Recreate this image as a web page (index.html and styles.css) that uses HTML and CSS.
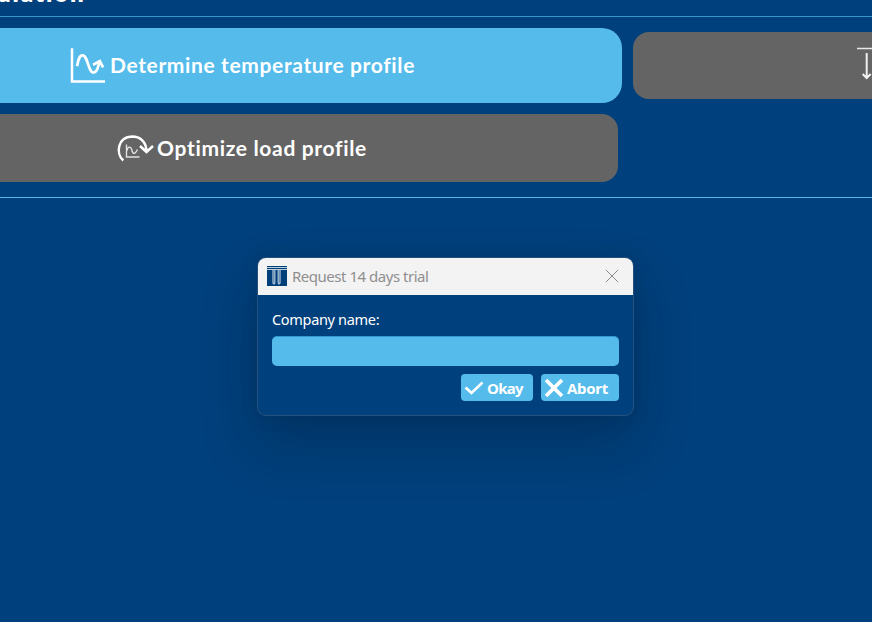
FILE: index.html
```html
<!DOCTYPE html>
<html lang="en">
<head>
<meta charset="utf-8">
<title>Request 14 days trial</title>
<link rel="stylesheet" href="styles.css">
</head>
<body>
<main class="page">
  <header class="heading"><h1>ulation</h1></header>
  <section class="options">
    <div class="row">
      <button class="option active">
        <svg class="icon-profile" viewBox="0 0 36 36" width="36" height="36"><path d="M3 1.500v32H35" stroke-width="2.500"/><path d="M8.300 17C9.500 11 10.500 7.300 13.500 7.300c5.500 0 5.500 17.200 11 17.200 3.500 0 4.800-5.500 6-11M25.200 16.200l5.600-3 2.700 5" stroke-width="2.700"/></svg>
        <span>Determine temperature profile</span>
      </button>
      <button class="option side">
        <svg viewBox="0 0 32 36" width="32" height="36"><path d="M0 2.500h32" stroke-width="1.500" opacity=".85"/><path d="M9.700 7v24M5.700 28l4 4 4-4" stroke-width="2" opacity=".9"/></svg>
      </button>
    </div>
    <button class="option optimize">
      <svg viewBox="0 0 38 30" width="38" height="30"><path d="M7.300 27.500C-.5 20.500 1.500 4 16 3.500c8 0 14.500 5 14.500 15.500M24 13l6.500 6 6.500-6" stroke-width="2.500"/><path d="M10.500 11.500v12.500h13M11 17.500c1-5 4-4 5 0s3 4 5.500-1" stroke-width="1.400" opacity=".8"/></svg>
      <span>Optimize load profile</span>
    </button>
  </section>
</main>
<div class="dialog" role="dialog">
  <div class="titlebar">
    <svg class="logo" viewBox="0 0 20 20" width="20" height="20"><path fill="#003f7a" stroke="none" d="M0 0h20v20H0z"/><path d="M0 1.500h20M0 3.500h20" stroke="#b9cddd" stroke-width="1"/><path d="M6 4v13q.9 1.800 1.800 0V4M11.200 4v13q.9 1.800 1.800 0V4" stroke="#b9cddd" stroke-width="1.200"/></svg>
    <span class="title">Request 14 days trial</span>
    <svg class="close" viewBox="0 0 12 12" width="12" height="12"><path d="M0 0l12 12M12 0L0 12"/></svg>
  </div>
  <form class="form">
    <label for="company">Company name:</label>
    <input id="company" type="text">
    <div class="actions">
      <button type="button" class="action okay"><svg viewBox="0 0 20 20" width="20" height="20"><path d="M1.500 9.500l6 5.500L18.500 4.500" stroke-width="2.600"/></svg><span>Okay</span></button>
      <button type="button" class="action abort"><svg viewBox="0 0 20 20" width="20" height="20"><path d="M2 2l16 16M18 2L2 18" stroke-width="3.800"/></svg><span>Abort</span></button>
    </div>
  </form>
</div>
</body>
</html>
```
FILE: styles.css
```css
* { box-sizing: border-box; }
body {
  margin: 0;
  width: 872px;
  height: 622px;
  overflow: hidden;
  background: #00407c;
  color: #fff;
  font-family: "Noto Sans", sans-serif;
}
svg { flex: none; fill: none; stroke: #fff; }
button { border: 0; padding: 0; color: #fff; font: inherit; }
.heading {
  height: 17px;
  border-bottom: 1px solid #3796cc;
  display: flex;
  align-items: flex-start;
}
h1 {
  margin: -20px 0 0 -3px;
  font: 800 24px/26px Lato, sans-serif;
  letter-spacing: 1.900px;
}
.options {
  height: 181px;
  padding-top: 11px;
  border-bottom: 1px solid #54b9e9;
}
.row { display: flex; align-items: center; gap: 11px; height: 75px; }
.option {
  display: flex;
  align-items: center;
  background: #646464;
  font: 700 21px/26px Lato, sans-serif;
  white-space: nowrap;
}
.active {
  width: 622px;
  height: 75px;
  padding-left: 69px;
  gap: 5px;
  border-radius: 0 20px 20px 0;
  background: #54bbeb;
  letter-spacing: .630px;
}
.active span { margin-top: -1px; }
.side {
  width: 239px;
  height: 67px;
  padding: 0 0 4px 224px;
  border-radius: 16px 0 0 16px;
  overflow: hidden;
}
.optimize {
  width: 618px;
  height: 68px;
  margin-top: 11px;
  padding-left: 116px;
  gap: 3px;
  border-radius: 0 16px 16px 0;
  letter-spacing: .670px;
}
.icon-profile { stroke-linecap: square; }
.dialog {
  position: absolute;
  left: 257px;
  top: 257px;
  width: 377px;
  height: 159px;
  border: 1px solid #26517c;
  border-radius: 9px;
  overflow: hidden;
  background: #00407c;
  box-shadow: 0 28px 54px rgba(0, 20, 40, .28), 0 0 18px rgba(0, 20, 40, .13);
}
.titlebar {
  height: 37px;
  display: flex;
  align-items: center;
  padding: 0 15px 2px 9px;
  background: #f3f3f3;
  color: #8f8f8f;
}
.title { margin-left: 5px; font-size: 15px; letter-spacing: -.480px; }
.close { margin-left: auto; stroke: #8b8b8b; overflow: visible; }
.form { display: flex; flex-direction: column; padding: 13px 14px 0; }
label { font-size: 14.500px; line-height: 22px; letter-spacing: -.320px; }
input {
  width: 347px;
  height: 30px;
  margin-top: 6px;
  border: 0;
  border-top: 1px solid #3298cf;
  border-radius: 5px;
  background: #54bbeb;
}
.actions { display: flex; justify-content: flex-end; gap: 8px; margin-top: 8px; }
.action {
  display: flex;
  align-items: center;
  gap: 3px;
  height: 27px;
  padding-left: 3px;
  border-radius: 4px;
  background: #54bbeb;
  font-size: 15px;
  font-weight: 700;
}
.okay { width: 72px; letter-spacing: -.7px; }
.abort { width: 78px; letter-spacing: -.3px; }
```
